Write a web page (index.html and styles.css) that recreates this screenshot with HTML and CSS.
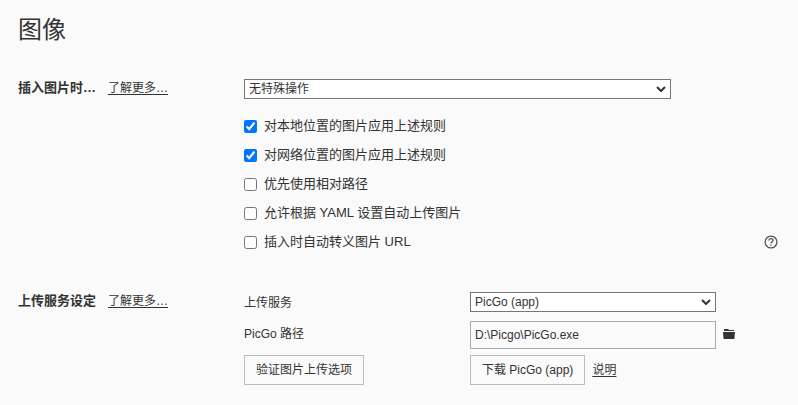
FILE: index.html
```
<!DOCTYPE html>
<html lang="zh-CN">
<head>
    <meta charset="UTF-8">
    <meta name="viewport" content="width=device-width, initial-scale=1.0">
    <title>图像</title>
    <link rel="stylesheet" href="styles.css">
</head>
<body>
    <h1>图像</h1>

    <section class="group">
        <div class="group-title">
            <h2><label for="insert-action">插入图片时…</label></h2>
            <a href="#">了解更多…</a>
        </div>
        <div class="group-body">
            <div class="select wide">
                <select id="insert-action">
                    <option>无特殊操作</option>
                </select>
                <svg class="arrow" viewBox="0 0 10 6"><path d="M1 1l4 4 4-4"/></svg>
            </div>
            <div class="checks">
                <label><input type="checkbox" checked>对本地位置的图片应用上述规则</label>
                <label><input type="checkbox" checked>对网络位置的图片应用上述规则</label>
                <label><input type="checkbox">优先使用相对路径</label>
                <label><input type="checkbox">允许根据 YAML 设置自动上传图片</label>
                <div class="check-row">
                    <label><input type="checkbox">插入时自动转义图片 URL</label>
                    <button class="icon-btn" aria-label="帮助">
                        <svg width="14" height="14" viewBox="0 0 14 14" fill="none" stroke="#555" stroke-width="1.3">
                            <circle cx="7" cy="7" r="5.9"/>
                            <path d="M5 5.6C5 4.3 5.9 3.6 7 3.6s2 .7 2 1.8C9 6.8 7 6.9 7 8.6M7 9.5v1.3"/>
                        </svg>
                    </button>
                </div>
            </div>
        </div>
    </section>

    <section class="group">
        <div class="group-title">
            <h2>上传服务设定</h2>
            <a href="#">了解更多…</a>
        </div>
        <div class="group-body upload">
            <label for="service">上传服务</label>
            <div class="select">
                <select id="service">
                    <option>PicGo (app)</option>
                </select>
                <svg class="arrow" viewBox="0 0 10 6"><path d="M1 1l4 4 4-4"/></svg>
            </div>
            <label for="picgo-path">PicGo 路径</label>
            <div class="field">
                <input class="path" id="picgo-path" type="text" value="D:\Picgo\PicGo.exe">
                <button class="icon-btn" aria-label="选择文件">
                    <svg width="12" height="10" viewBox="0 0 12 10" fill="#333">
                        <path d="M1 0h4l1 1h5v1H1z"/>
                        <path d="M0 3h12l-.6 7H.6z"/>
                    </svg>
                </button>
            </div>
            <div><button class="btn">验证图片上传选项</button></div>
            <div class="field">
                <button class="btn">下载 PicGo (app)</button>
                <a href="#">说明</a>
            </div>
        </div>
    </section>
</body>
</html>
```

FILE: styles.css
```
* {
    box-sizing: border-box;
}
body {
    margin: 0;
    padding: 12px 20px 20px 18px;
    background: #fafafa;
    color: #333;
    font: 12px/20px "Liberation Sans", "Noto Sans CJK SC", sans-serif;
}
h1 {
    margin: 0 0 31px;
    font-size: 24px;
    line-height: 36px;
    font-weight: 400;
}
h2 {
    margin: 0;
    font-size: 13px;
    font-weight: bold;
}
a {
    color: #333;
    text-underline-offset: 2px;
}
.group {
    display: grid;
    grid-template-columns: 226px 1fr;
}
.group + .group {
    margin-top: 40px;
}
.group-title {
    display: flex;
    align-items: center;
    align-self: start;
    line-height: 18px;
}
.group-title h2 {
    width: 90px;
    white-space: nowrap;
}
.select {
    position: relative;
    width: 246px;
    height: 20px;
}
.select.wide {
    width: 80%;
}
select {
    display: block;
    width: 100%;
    height: 100%;
    padding: 0 20px 0 4px;
    appearance: none;
    background: #fff;
    border: 1px solid #767676;
    border-radius: 0;
    color: #333;
    font: inherit;
    line-height: 18px;
}
.arrow {
    position: absolute;
    right: 5px;
    top: 7px;
    width: 10px;
    height: 6px;
    fill: none;
    stroke: #333;
    stroke-width: 2;
    pointer-events: none;
}
.checks {
    display: grid;
    gap: 9px;
    margin-top: 17px;
    font-size: 13px;
}
.checks label {
    display: flex;
    align-items: center;
    gap: 7px;
}
.checks input {
    width: 13px;
    height: 13px;
    margin: 0;
    accent-color: #0075ff;
}
.check-row {
    display: flex;
    align-items: center;
    justify-content: space-between;
}
.icon-btn {
    display: flex;
    padding: 0;
    background: none;
    border: none;
    cursor: pointer;
}
.upload {
    display: grid;
    grid-template-columns: 226px 1fr;
    align-items: center;
}
.upload .select {
    margin-bottom: 1px;
}
.field {
    display: flex;
    align-items: center;
    gap: 7px;
}
.path {
    width: 246px;
    height: 28px;
    margin: 8px 0 6px;
    padding: 0 4px;
    background: #fafafa;
    border: 1px solid #aaa;
    color: #333;
    font: inherit;
}
.btn {
    height: 30px;
    padding: 0 11px;
    background: #fafafa;
    border: 1px solid #bbb;
    color: #333;
    font: inherit;
    cursor: pointer;
}
```
